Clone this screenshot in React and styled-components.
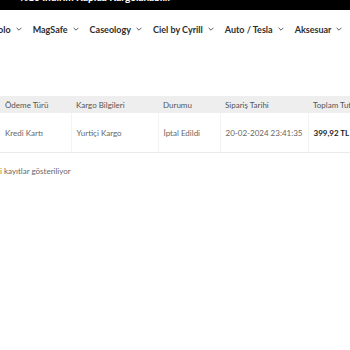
import React from "react";
import styled, { createGlobalStyle } from "styled-components";

const Global = createGlobalStyle`
  html, body { margin: 0; padding: 0; background: #fff; }
  body { font-family: Lato, "Open Sans", sans-serif; overflow: hidden; }
`;

const Page = styled.div`
  width: 350px;
  height: 350px;
  overflow: hidden;
  display: flex;
  flex-direction: column;
`;

const TopBar = styled.div`
  height: 10px;
  background: #000;
  overflow: hidden;
  display: flex;
  align-items: flex-end;
  padding-left: 20px;
`;

const TopText = styled.span`
  color: #fff;
  font-weight: 700;
  font-size: 10px;
  line-height: 10px;
  white-space: nowrap;
  transform: translateY(-8px);
`;

const Nav = styled.nav`
  height: 38px;
  display: flex;
  align-items: center;
  gap: 11px;
  margin-left: -33px;
  white-space: nowrap;
`;

const NavItem = styled.a`
  display: flex;
  align-items: center;
  gap: 5px;
  font-size: 9px;
  font-weight: 700;
  color: #2e2e2e;
  text-decoration: none;
`;

const Chevron = () => (
  <svg width="6" height="6" viewBox="0 0 10 10" fill="none" stroke="#555" strokeWidth="1.6" strokeLinecap="round" strokeLinejoin="round">
    <path d="M1.5 3.5 L5 7 L8.5 3.5" />
  </svg>
);

const TableWrap = styled.div`
  margin-top: 48px;
`;

const Table = styled.table`
  border-collapse: collapse;
  table-layout: fixed;
  width: 380px;
  font-size: 8px;
  color: #555;
`;

const Th = styled.th`
  background: #eeeeee;
  font-weight: 400;
  text-align: left;
  height: 17px;
  padding: 0 5px;
  white-space: nowrap;
  overflow: hidden;
`;

const Td = styled.td`
  height: 39px;
  padding: 0 5px;
  border-right: 1px solid #f3f3f3;
  border-bottom: 1px solid #eaeaea;
  white-space: nowrap;
  color: ${(p) => (p.$strong ? "#222" : "#666")};
  font-weight: ${(p) => (p.$strong ? 700 : 400)};
`;

const Info = styled.div`
  margin-top: 13px;
  font-size: 8px;
  color: #666;
  white-space: nowrap;
`;

const Green = styled.span`
  color: #6a9a3a;
`;

const cols = [71, 87, 62, 88, 72];

export default function App() {
  const nav = ["Apple Polo", "MagSafe", "Caseology", "Ciel by Cyrill", "Auto / Tesla", "Aksesuar"];
  return (
    <Page>
      <Global />
      <TopBar>
        <TopText>%10 İndirim Kapıda Kargolanabilir</TopText>
      </TopBar>
      <Nav>
        {nav.map((n) => (
          <NavItem key={n}>
            {n}
            <Chevron />
          </NavItem>
        ))}
      </Nav>
      <TableWrap>
        <Table>
          <colgroup>
            {cols.map((w, i) => (
              <col key={i} style={{ width: w }} />
            ))}
          </colgroup>
          <thead>
            <tr>
              <Th>Ödeme Türü</Th>
              <Th>Kargo Bilgileri</Th>
              <Th>Durumu</Th>
              <Th>Sipariş Tarihi</Th>
              <Th>Toplam Tutar</Th>
            </tr>
          </thead>
          <tbody>
            <tr>
              <Td>Kredi Kartı</Td>
              <Td>Yurtiçi Kargo</Td>
              <Td>İptal Edildi</Td>
              <Td>20-02-2024 23:41:35</Td>
              <Td $strong>399,92 TL</Td>
            </tr>
          </tbody>
        </Table>
      </TableWrap>
      <Info>
        <Green>i</Green> kayıtlar gösteriliyor
      </Info>
    </Page>
  );
}
